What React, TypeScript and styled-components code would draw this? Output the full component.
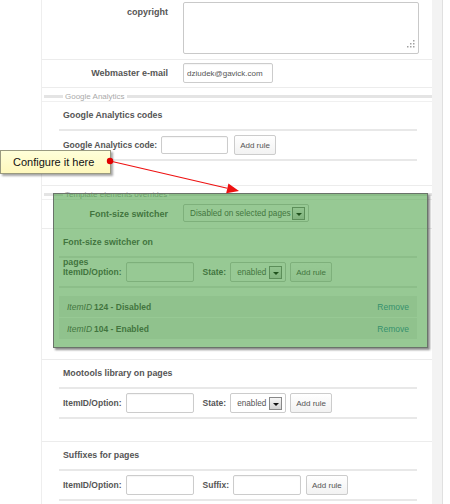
import React from "react";
import styled, { createGlobalStyle } from "styled-components";

const GlobalStyle = createGlobalStyle`
  html, body { margin: 0; padding: 0; background: #fff; }
  body { font-family: "Liberation Sans", Arial, sans-serif; }
  * { box-sizing: border-box; }
`;

const Page = styled.div`
  position: relative;
  width: 450px;
  height: 504px;
  overflow: hidden;
  display: flex;
  background: #fff;
  color: #555;
  font-family: "Liberation Sans", Arial, sans-serif;
`;

const Gutter = styled.div`
  width: 41px;
  flex: none;
`;

const Panel = styled.div`
  width: 391px;
  flex: none;
  border-left: 1px solid #eeeeee;
  display: flex;
  flex-direction: column;
`;

const SideStrip = styled.div`
  width: 11px;
  flex: none;
  background: #f3f3f3;
  border-right: 1px solid #e0e0e0;
`;

const FieldRow = styled.div<{ $pt: number; $pb: number }>`
  display: grid;
  grid-template-columns: 126px 1fr;
  column-gap: 15px;
  align-items: start;
  padding: ${(p) => p.$pt}px 0 ${(p) => p.$pb}px;
  border-bottom: 1px solid #ececec;
`;

const FieldLabel = styled.div`
  text-align: right;
  font-weight: bold;
  font-size: 9px;
  line-height: 20px;
  color: #555;
`;

const AreaWrap = styled.div`
  position: relative;
  width: 236px;
  height: 52px;
`;

const TextArea = styled.textarea`
  display: block;
  width: 100%;
  height: 100%;
  border: 1px solid #c9c9c9;
  border-radius: 2px;
  resize: none;
  background: #fff;
`;

const Grip = styled.svg`
  position: absolute;
  right: 4px;
  bottom: 6px;
`;

const TextInput = styled.input<{ $w: number; $h: number }>`
  width: ${(p) => p.$w}px;
  height: ${(p) => p.$h}px;
  border: 1px solid #cccccc;
  border-radius: 2px;
  padding: 0 3px;
  font-family: "Liberation Sans", Arial, sans-serif;
  font-size: 8px;
  color: #555;
  background: #fff;
  box-shadow: inset 0 1px 1px rgba(0, 0, 0, 0.04);
`;

const Legend = styled.div`
  display: flex;
  align-items: center;
  height: 18px;
  padding: 4px 0 0 2px;
  border-bottom: 1px solid #f0f0f0;
  &::before {
    content: "";
    width: 19px;
    height: 3px;
    background: #e4e4e4;
  }
  &::after {
    content: "";
    flex: 1;
    height: 3px;
    background: #e4e4e4;
  }
`;

const LegendText = styled.span`
  padding: 0 2px;
  font-size: 8px;
  color: #aaaaaa;
  white-space: nowrap;
`;

const Section = styled.div<{ $pb: number }>`
  padding: 0 15px ${(p) => p.$pb}px 17px;
  border-bottom: 1px solid #ececec;
`;

const SectionTitle = styled.div`
  box-sizing: content-box;
  height: 24px;
  padding: 3px 0 0 4px;
  line-height: 20px;
  font-size: 8.8px;
  font-weight: bold;
  color: #555;
  border-bottom: 2px solid #e8e8e8;
  overflow: visible;
`;

const TitleText = styled.span<{ $w?: number }>`
  display: inline-block;
  ${(p) => (p.$w ? `width: ${p.$w}px;` : "white-space: nowrap;")}
`;

const ControlRow = styled.div`
  box-sizing: content-box;
  display: flex;
  align-items: center;
  gap: 4px;
  height: 20px;
  padding: 4px 0 4px 4px;
  border-bottom: 2px solid #e8e8e8;
`;

const RowLabel = styled.span<{ $ml?: number }>`
  font-size: 8.5px;
  font-weight: bold;
  color: #555;
  white-space: nowrap;
  margin-left: ${(p) => p.$ml ?? 0}px;
`;

const Button = styled.button<{ $ml?: number }>`
  height: 20px;
  padding: 0 5px;
  margin-left: ${(p) => p.$ml ?? 0}px;
  font-family: "Liberation Sans", Arial, sans-serif;
  font-size: 8px;
  color: #555;
  background: linear-gradient(#ffffff, #f2f2f2);
  border: 1px solid #cccccc;
  border-radius: 2px;
  white-space: nowrap;
`;

const Select = styled.div<{ $w: number; $h: number }>`
  display: inline-flex;
  align-items: center;
  justify-content: space-between;
  width: ${(p) => p.$w}px;
  height: ${(p) => p.$h}px;
  padding: 0 3px 0 6px;
  border: 1px solid #cccccc;
  border-radius: 2px;
  background: #fff;
  font-size: 8.2px;
  color: #555;
  white-space: nowrap;
`;

const DropButton = styled.span`
  display: flex;
  align-items: center;
  justify-content: center;
  width: 13px;
  height: 13px;
  border: 1px solid #888;
  background: linear-gradient(#f6f6f6, #d2d2d2);
  &::after {
    content: "";
    margin-top: 2px;
    border-left: 3px solid transparent;
    border-right: 3px solid transparent;
    border-top: 3px solid #111;
  }
`;

const ItemList = styled.div`
  display: flex;
  flex-direction: column;
  gap: 1px;
  margin-top: 8px;
`;

const Item = styled.div`
  display: flex;
  align-items: center;
  justify-content: space-between;
  height: 21px;
  padding: 0 8px;
  background: #f1f1f1;
  font-size: 8.5px;
  color: #555;
`;

const ItemKey = styled.span`
  font-style: italic;
  margin-right: 2px;
`;

const ItemValue = styled.b`
  font-weight: bold;
`;

const RemoveLink = styled.a`
  color: #3a8db0;
  text-decoration: none;
  font-size: 8.5px;
`;

const Highlight = styled.div`
  position: absolute;
  left: 53px;
  top: 193px;
  width: 375px;
  height: 155px;
  background: rgba(48, 148, 42, 0.5);
  border: 1px solid #6a736a;
  box-shadow: 2px 2px 2px rgba(0, 0, 0, 0.45);
  pointer-events: none;
`;

const Callout = styled.div`
  position: absolute;
  left: 0;
  top: 150px;
  width: 111px;
  height: 24px;
  display: flex;
  align-items: center;
  padding-left: 12px;
  background: linear-gradient(#ffffd9, #fff8bc);
  border: 1px solid #9a9a80;
  box-shadow: 2px 2px 2px rgba(0, 0, 0, 0.35);
  font-size: 11px;
  color: #111;
  white-space: nowrap;
`;

const ArrowLayer = styled.svg`
  position: absolute;
  left: 0;
  top: 0;
  pointer-events: none;
`;

const Pointer = () => {
  const tip = [239, 191];
  const from = [110, 161];
  const dx = tip[0] - from[0];
  const dy = tip[1] - from[1];
  const len = Math.hypot(dx, dy);
  const ux = dx / len;
  const uy = dy / len;
  const bx = tip[0] - ux * 12;
  const by = tip[1] - uy * 12;
  const px = -uy * 5;
  const py = ux * 5;
  const pts = `${tip[0]},${tip[1]} ${bx + px},${by + py} ${bx - px},${by - py}`;
  return (
    <ArrowLayer width={450} height={504} viewBox="0 0 450 504">
      <line x1={from[0]} y1={from[1]} x2={bx} y2={by} stroke="#ee1111" strokeWidth={1.2} />
      <polygon points={pts} fill="#ee1111" />
      <circle cx={from[0]} cy={from[1]} r={3.2} fill="#e00000" />
    </ArrowLayer>
  );
};

const ResizeGrip = () => (
  <Grip width={9} height={9} viewBox="0 0 9 9">
    {[
      [7, 1],
      [4, 4],
      [7, 4],
      [1, 7],
      [4, 7],
      [7, 7],
    ].map(([x, y], i) => (
      <rect key={i} x={x} y={y} width={1.5} height={1.5} fill="#a0a0a0" />
    ))}
  </Grip>
);

const EnabledSelect = () => (
  <Select $w={56} $h={20}>
    enabled
    <DropButton />
  </Select>
);

type RuleItem = { id: number; state: string };
const rules: RuleItem[] = [
  { id: 124, state: "Disabled" },
  { id: 104, state: "Enabled" },
];

export default function App() {
  return (
    <>
      <GlobalStyle />
      <Page>
        <Gutter />
        <Panel>
          <FieldRow $pt={2} $pb={5}>
            <FieldLabel>copyright</FieldLabel>
            <AreaWrap>
              <TextArea />
              <ResizeGrip />
            </AreaWrap>
          </FieldRow>
          <FieldRow $pt={3} $pb={4}>
            <FieldLabel>Webmaster e-mail</FieldLabel>
            <TextInput $w={90} $h={20} defaultValue="dziudek@gavick.com" />
          </FieldRow>

          <Legend>
            <LegendText>Google Analytics</LegendText>
          </Legend>
          <Section $pb={24}>
            <SectionTitle>
              <TitleText>Google Analytics codes</TitleText>
            </SectionTitle>
            <ControlRow>
              <RowLabel>Google Analytics code:</RowLabel>
              <TextInput $w={67} $h={18} />
              <Button $ml={2}>Add rule</Button>
            </ControlRow>
          </Section>

          <Legend>
            <LegendText>Template elements overrides</LegendText>
          </Legend>
          <FieldRow $pt={4} $pb={4}>
            <FieldLabel>Font-size switcher</FieldLabel>
            <Select $w={126} $h={18}>
              Disabled on selected pages
              <DropButton />
            </Select>
          </FieldRow>
          <Section $pb={20}>
            <SectionTitle>
              <TitleText $w={100}>Font-size switcher on pages</TitleText>
            </SectionTitle>
            <ControlRow>
              <RowLabel>ItemID/Option:</RowLabel>
              <TextInput $w={68} $h={20} />
              <RowLabel $ml={5}>State:</RowLabel>
              <EnabledSelect />
              <Button>Add rule</Button>
            </ControlRow>
            <ItemList>
              {rules.map((r) => (
                <Item key={r.id}>
                  <span>
                    <ItemKey>ItemID</ItemKey>
                    <ItemValue>
                      {r.id} - {r.state}
                    </ItemValue>
                  </span>
                  <RemoveLink href="#">Remove</RemoveLink>
                </Item>
              ))}
            </ItemList>
          </Section>

          <Section $pb={22}>
            <SectionTitle>
              <TitleText>Mootools library on pages</TitleText>
            </SectionTitle>
            <ControlRow>
              <RowLabel>ItemID/Option:</RowLabel>
              <TextInput $w={68} $h={20} />
              <RowLabel $ml={5}>State:</RowLabel>
              <EnabledSelect />
              <Button>Add rule</Button>
            </ControlRow>
          </Section>

          <Section $pb={22}>
            <SectionTitle>
              <TitleText>Suffixes for pages</TitleText>
            </SectionTitle>
            <ControlRow>
              <RowLabel>ItemID/Option:</RowLabel>
              <TextInput $w={68} $h={20} />
              <RowLabel $ml={5}>Suffix:</RowLabel>
              <TextInput $w={68} $h={20} />
              <Button $ml={1}>Add rule</Button>
            </ControlRow>
          </Section>
        </Panel>
        <SideStrip />

        <Highlight />
        <Callout>Configure it here</Callout>
        <Pointer />
      </Page>
    </>
  );
}
